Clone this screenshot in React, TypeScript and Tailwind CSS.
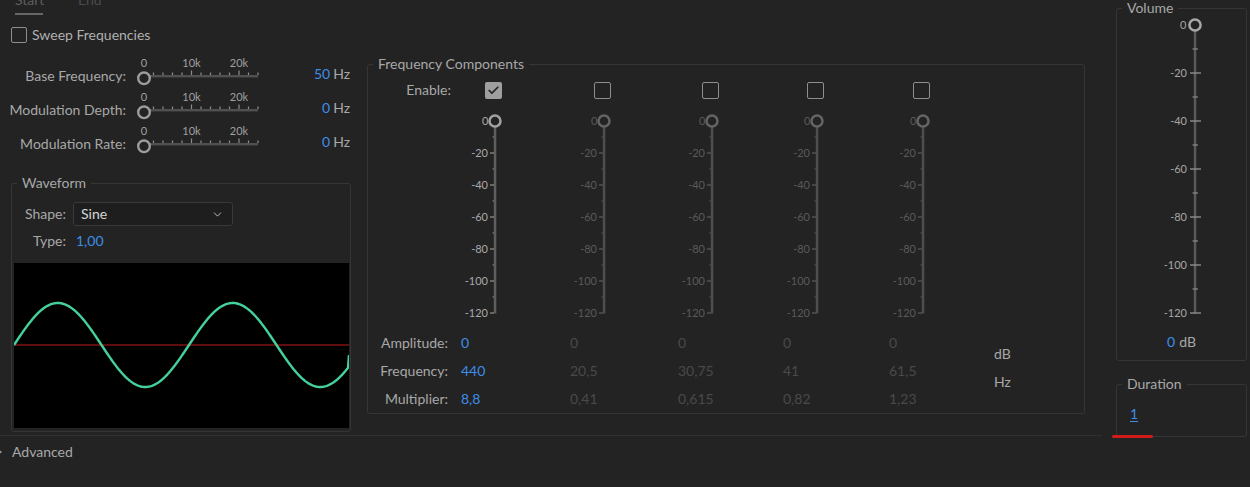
import { Check, ChevronDown } from "lucide-react";

const FONT = "Lato, sans-serif";

const freqCols = [
  { enabled: true, amp: "0", freq: "440", mult: "8,8", width: "w-[109px]" },
  { enabled: false, amp: "0", freq: "20,5", mult: "0,41", width: "w-[108px]" },
  { enabled: false, amp: "0", freq: "30,75", mult: "0,615", width: "w-[105px]" },
  { enabled: false, amp: "0", freq: "41", mult: "0,82", width: "w-[106px]" },
  { enabled: false, amp: "0", freq: "61,5", mult: "1,23", width: "w-[106px]" },
];

const sliderRows = [
  { label: "Base Frequency:", value: "50" },
  { label: "Modulation Depth:", value: "0" },
  { label: "Modulation Rate:", value: "0" },
];

const HSlider = () => {
  const ticks: number[] = [];
  for (let k = 2; k <= 24; k += 2) ticks.push(k);
  return (
    <svg width={135} height={34} className="shrink-0 overflow-visible">
      <rect x={20} y={14} width={108} height={2.4} fill="#505050" />
      {ticks.map((k) => {
        const x = 14 + 4.75 * k;
        const major = k % 10 === 0;
        return (
          <line
            key={k}
            x1={x}
            x2={x}
            y1={major ? 9.5 : 11.5}
            y2={14}
            stroke="#8c8c8c"
            strokeWidth={1.2}
          />
        );
      })}
      <g fill="#a0a0a0" fontSize={11} fontFamily={FONT}>
        <text x={14} y={6} textAnchor="middle">0</text>
        <text x={61.5} y={6} textAnchor="middle">10k</text>
        <text x={109} y={6} textAnchor="middle">20k</text>
      </g>
      <circle cx={14} cy={17.3} r={5.8} fill="#232323" stroke="#9c9c9c" strokeWidth={2.4} />
    </svg>
  );
};

const FreqSlider = ({ active }: { active: boolean }) => {
  const text = active ? "#a9a9a9" : "#5a5a5a";
  const tick = active ? "#8a8a8a" : "#585858";
  const knob = active ? "#a2a2a2" : "#646464";
  const labels = [-20, -40, -60, -80, -100, -120];
  return (
    <svg width={44} height={208} className="overflow-visible">
      <rect x={34.8} y={14} width={2.5} height={186.5} fill={active ? "#5e5e5e" : "#4e4e4e"} />
      {labels.map((_, i) => (
        <line key={`m${i}`} x1={33.5} x2={35} y1={24 + 32 * i} y2={24 + 32 * i} stroke={tick} strokeWidth={1} />
      ))}
      <g fill={text} fontSize={11} fontFamily={FONT} textAnchor="end">
        <text x={29.5} y={12}>0</text>
        {labels.map((v, i) => {
          const y = 8 + 32 * (i + 1);
          return (
            <g key={v}>
              <line x1={31} x2={35} y1={y} y2={y} stroke={tick} strokeWidth={1.3} />
              <text x={29} y={y + 4}>{v}</text>
            </g>
          );
        })}
      </g>
      <circle cx={36} cy={8} r={5.5} fill="#232323" stroke={knob} strokeWidth={2.5} />
    </svg>
  );
};

const VolumeSlider = () => {
  const labels = [-20, -40, -60, -80, -100, -120];
  return (
    <svg width={60} height={300} className="overflow-visible">
      <rect x={38.8} y={14} width={2.5} height={282.5} fill="#5a5a5a" />
      {labels.map((_, i) => (
        <line key={`m${i}`} x1={37.5} x2={43} y1={32 + 48 * i} y2={32 + 48 * i} stroke="#8a8a8a" strokeWidth={1.2} />
      ))}
      <g fill="#a6a6a6" fontSize={11} fontFamily={FONT} textAnchor="end">
        <text x={31.5} y={12}>0</text>
        {labels.map((v, i) => {
          const y = 8 + 48 * (i + 1);
          return (
            <g key={v}>
              <line x1={35} x2={46} y1={y} y2={y} stroke="#8e8e8e" strokeWidth={1.4} />
              <text x={32} y={y + 4}>{v}</text>
            </g>
          );
        })}
      </g>
      <circle cx={40} cy={8} r={5.6} fill="#232323" stroke="#a8a8a8" strokeWidth={2.5} />
    </svg>
  );
};

const SineWave = () => {
  const pts: string[] = [];
  for (let x = 0; x <= 334; x += 1) {
    const y = 82 - 42 * Math.sin((2 * Math.PI * x) / 175);
    pts.push(`${x},${y.toFixed(2)}`);
  }
  return (
    <svg width={335} height={165} viewBox="0 0 335 165" className="block">
      <rect width={335} height={165} fill="#000" />
      <line x1={0} x2={335} y1={82} y2={82} stroke="#7f1212" strokeWidth={1.6} />
      <polyline points={`${pts.join(" ")} 335,92`} fill="none" stroke="#45d19b" strokeWidth={2.4} />
    </svg>
  );
};

const Box = ({ checked, className }: { checked?: boolean; className: string }) =>
  checked ? (
    <div className={`${className} rounded-[2px] bg-[#9f9f9f] flex items-center justify-center`}>
      <Check size={13} strokeWidth={3.2} color="#262626" />
    </div>
  ) : (
    <div className={`${className} rounded-[2px] border-[1.5px] border-[#8e8e8e]`} />
  );

const Tabs = () => (
  <div className="flex pl-[15px] mt-[-9px] text-[#5e5e5e]">
    <div className="w-[63px] flex flex-col">
      <span className="leading-[18px]">Start</span>
      <div className="mt-[4px] h-[2px] w-[28px] bg-[#676767]" />
    </div>
    <span className="leading-[18px] text-[#4c4c4c]">End</span>
  </div>
);

const LeftColumn = () => (
  <div className="w-[352px] shrink-0 flex flex-col">
    <div className="mt-[12px] pl-[11px] flex items-center gap-[5px] h-[16px]">
      <Box className="w-[16px] h-[16px]" />
      <span className="text-[#b0b0b0]">Sweep Frequencies</span>
    </div>
    <div className="mt-[18px] flex flex-col">
      {sliderRows.map((row) => (
        <div key={row.label} className="h-[34px] flex items-start">
          <span className="w-[127px] pr-[1px] pt-[6px] text-right">{row.label}</span>
          <div className="ml-[3px]">
            <HSlider />
          </div>
          <div className="flex-1 pt-[4px] pr-[2px] text-right">
            <span className="text-[#3d8ee8]">{row.value}</span>
            <span className="ml-[3px]">Hz</span>
          </div>
        </div>
      ))}
    </div>
    <fieldset className="mt-[11px] ml-[11px] w-[340px] border border-[#363636] rounded-[3px] pb-[3px]">
      <legend className="ml-[5px] px-[5px] leading-[18px]">Waveform</legend>
      <div className="pt-[10px] flex items-center h-[34px]">
        <span className="w-[54px] text-right">Shape:</span>
        <div className="ml-[7px] w-[160px] h-[24px] bg-[#1e1e1e] border border-[#393939] rounded-[3px] flex items-center justify-between pl-[7px] pr-[8px]">
          <span className="text-[#d6d6d6]">Sine</span>
          <ChevronDown size={13} strokeWidth={1.8} color="#bdbdbd" />
        </div>
      </div>
      <div className="mt-[6px] flex items-center h-[18px]">
        <span className="w-[54px] text-right">Type:</span>
        <span className="ml-[10px] text-[#3d8ee8]">1,00</span>
      </div>
      <div className="mt-[13px] ml-[2px]">
        <SineWave />
      </div>
    </fieldset>
  </div>
);

const FrequencyComponents = () => (
  <fieldset className="ml-[15px] mt-[40px] w-[718px] h-fit border border-[#363636] rounded-[3px]">
    <legend className="ml-[5px] px-[5px] leading-[18px]">Frequency Components</legend>
    <div className="mt-[8px] flex items-center h-[18px]">
      <span className="w-[83px] text-right">Enable:</span>
      {freqCols.map((c, i) => (
        <div key={i} className={`${c.width} pl-[34px]`}>
          <Box checked={c.enabled} className="w-[17px] h-[17px]" />
        </div>
      ))}
    </div>
    <div className="mt-[14px] flex">
      <div className="w-[83px]" />
      {freqCols.map((c, i) => (
        <div key={i} className={`${c.width} pl-[8px]`}>
          <FreqSlider active={c.enabled} />
        </div>
      ))}
    </div>
    <div className="mt-[8px] flex leading-[28px]">
      <div className="w-[83px] pr-[3px] flex flex-col text-right">
        <span>Amplitude:</span>
        <span>Frequency:</span>
        <span>Multiplier:</span>
      </div>
      {freqCols.map((c, i) => (
        <div
          key={i}
          className={`${c.width} pl-[10px] flex flex-col ${c.enabled ? "text-[#3d8ee8]" : "text-[#4a4a4a]"}`}
        >
          <span>{c.amp}</span>
          <span>{c.freq}</span>
          <span>{c.mult}</span>
        </div>
      ))}
      <div className="pl-[9px] pt-[11px] flex flex-col">
        <span>dB</span>
        <span>Hz</span>
      </div>
    </div>
  </fieldset>
);

const RightColumn = () => (
  <div className="pl-[14px] flex flex-col">
    <fieldset className="mt-[-1px] w-[131px] border border-[#363636] rounded-[3px] pb-[9px]">
      <legend className="ml-[5px] px-[5px] leading-[18px]">Volume</legend>
      <div className="ml-[38px]">
        <VolumeSlider />
      </div>
      <div className="mt-[16px] text-center leading-[18px]">
        <span className="text-[#3d8ee8]">0</span>
        <span className="ml-[4px]">dB</span>
      </div>
    </fieldset>
    <fieldset className="mt-[14px] w-[131px] border border-[#363636] rounded-[3px] pt-[12px] pl-[13px] pb-[13px]">
      <legend className="ml-[-8px] px-[5px] leading-[18px]">Duration</legend>
      <span className="text-[#3d8ee8] underline underline-offset-2">1</span>
    </fieldset>
    <div className="ml-[-4px] mt-[-2px] h-[3px] w-[41px] rounded-full bg-[#d11b1b]" />
  </div>
);

const Advanced = () => (
  <div className="mt-[7px] flex items-center h-[18px]">
    <svg width={6} height={8} className="ml-[-3px]">
      <path d="M0 0 L5 4 L0 8 Z" fill="#9a9a9a" />
    </svg>
    <span className="ml-[9px]">Advanced</span>
  </div>
);

export default function App() {
  return (
    <div className="w-[1250px] h-[487px] overflow-hidden bg-[#232323] text-[#a8a8a8] text-[14px] leading-[18px] font-[Lato,sans-serif] flex">
      <div className="w-[1102px] shrink-0 flex flex-col">
        <div className="h-[436px] border-b border-[#303030] flex flex-col">
          <Tabs />
          <div className="flex">
            <LeftColumn />
            <FrequencyComponents />
          </div>
        </div>
        <Advanced />
      </div>
      <RightColumn />
    </div>
  );
}
